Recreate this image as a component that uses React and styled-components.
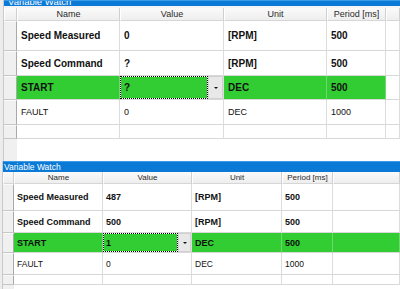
import React from "react";
import styled, { createGlobalStyle } from "styled-components";

const GlobalStyle = createGlobalStyle`
  html, body {
    margin: 0;
    padding: 0;
    width: 400px;
    height: 289px;
    overflow: hidden;
    background: #fff;
  }
  body {
    font-family: "Liberation Sans", Arial, sans-serif;
  }
`;

const GREEN = "#32cd32";

// two copies of the same watch window, the top one shown bigger
const TOP = {
  gutter: 4,
  cols: "13px 103px 104px 103px 59px 1fr",
  title: 6,
  titleSize: 9.5,
  titleIndent: 4,
  gap: 2,
  header: 13,
  headerSize: 9,
  rows: [30, 25, 24, 25, 14],
  bold: 10,
  regular: 9,
  pad: 4,
  button: 15,
  filler: 22,
  greenFiller: false,
};

const BOTTOM = {
  gutter: 3,
  cols: "11px 89px 89px 90px 51px 1fr",
  title: 11,
  titleSize: 8.5,
  titleIndent: 1,
  gap: 0,
  header: 12,
  headerSize: 8,
  rows: [27, 22, 20, 22, 10],
  bold: 9,
  regular: 8.5,
  pad: 3,
  button: 13,
  filler: 4,
  greenFiller: true,
};

const data = [
  { name: "Speed Measured", unit: "[RPM]", bold: true },
  { name: "Speed Command", unit: "[RPM]", bold: true },
  { name: "START", unit: "DEC", bold: true, selected: true },
  { name: "FAULT", unit: "DEC", bold: false },
];

const Page = styled.div`
  display: flex;
  flex-direction: column;
  width: 400px;
  height: 289px;
`;

const Panel = styled.div`
  display: flex;
  flex-direction: row;
`;

const Gutter = styled.div`
  width: ${(p) => p.$w - 1}px;
  background: #ececec;
  border-right: 1px solid #c9c9c9;
  flex-shrink: 0;
`;

const Body = styled.div`
  flex: 1;
  display: flex;
  flex-direction: column;
  min-width: 0;
`;

const TitleBar = styled.div`
  height: ${(p) => p.$h}px;
  background: #0b7ad6;
  border-top: 1px solid #3d9ae6;
  box-sizing: border-box;
  display: flex;
  align-items: flex-end;
  overflow: hidden;
  padding-left: ${(p) => p.$indent}px;
`;

const TitleText = styled.span`
  color: #fff;
  font-size: ${(p) => p.$size}px;
  line-height: ${(p) => p.$size + 1}px;
  white-space: nowrap;
  margin-bottom: ${(p) => (p.$cut ? -1 : 0)}px;
`;

const Spacer = styled.div`
  height: ${(p) => p.$h}px;
  background: #f4f4f4;
`;

const Row = styled.div`
  display: grid;
  grid-template-columns: ${(p) => p.$cols};
  height: ${(p) => p.$h}px;
`;

const HeadCell = styled.div`
  background: linear-gradient(#fafafa, #eeeeee);
  border-left: 1px solid #fff;
  border-right: 1px solid #cfcfcf;
  border-bottom: 1px solid #d6d6d6;
  box-sizing: border-box;
  color: #2a2a2a;
  font-size: ${(p) => p.$size}px;
  display: flex;
  align-items: center;
  justify-content: center;
  white-space: nowrap;
  overflow: hidden;
`;

const RowHead = styled.div`
  background: #f0f0f0;
  border-top: 1px solid #fafafa;
  border-bottom: 1px solid #c6c6c6;
  border-right: 1px solid #a9a9a9;
  box-sizing: border-box;
`;

const Cell = styled.div`
  background: ${(p) => (p.$selected ? GREEN : "#fff")};
  border-right: 1px solid ${(p) => (p.$selected ? "#6fd96f" : "#dcdcdc")};
  border-bottom: 1px solid #d8d8d8;
  box-sizing: border-box;
  color: #111;
  font-size: ${(p) => (p.$bold ? p.$bold : p.$regular)}px;
  font-weight: ${(p) => (p.$bold ? 700 : 400)};
  padding-left: ${(p) => p.$pad}px;
  display: flex;
  align-items: center;
  white-space: nowrap;
  overflow: hidden;
`;

const EditCell = styled.div`
  display: flex;
  border-right: 1px solid #dcdcdc;
  border-bottom: 1px solid #d8d8d8;
  box-sizing: border-box;
  background: #fff;
`;

const Editor = styled.div`
  flex: 1;
  border: 1px dotted #000;
  background: linear-gradient(${GREEN}, ${GREEN}) padding-box, #fff border-box;
  box-sizing: border-box;
  display: flex;
  align-items: center;
  padding-left: ${(p) => p.$pad - 1}px;
  font-size: ${(p) => p.$size}px;
  font-weight: 700;
  color: #111;
`;

const DropButton = styled.div`
  width: ${(p) => p.$w}px;
  background: #e8e8e8;
  border: 1px solid #d0d0d0;
  box-sizing: border-box;
  display: flex;
  align-items: center;
  justify-content: center;
`;

const Arrow = styled.span`
  width: 0;
  height: 0;
  border-left: 2px solid transparent;
  border-right: 2px solid transparent;
  border-top: 2px solid #111;
`;

const Filler = styled.div`
  height: ${(p) => p.$h}px;
  display: grid;
  grid-template-columns: ${(p) => p.$cols};
`;

const FillerHead = styled.div`
  background: #f0f0f0;
`;

const FillerBody = styled.div`
  background: #fff;
`;

const WatchPanel = ({ cfg, values, editValue, cutTitle }) => {
  const cellProps = { $pad: cfg.pad, $regular: cfg.regular };
  return (
    <Panel>
      <Gutter $w={cfg.gutter} />
      <Body>
        <TitleBar $h={cfg.title} $indent={cfg.titleIndent}>
          <TitleText $size={cfg.titleSize} $cut={cutTitle}>
            Variable Watch
          </TitleText>
        </TitleBar>
        {cfg.gap > 0 && <Spacer $h={cfg.gap} />}
        <Row $cols={cfg.cols} $h={cfg.header}>
          <HeadCell $size={cfg.headerSize} />
          <HeadCell $size={cfg.headerSize}>Name</HeadCell>
          <HeadCell $size={cfg.headerSize}>Value</HeadCell>
          <HeadCell $size={cfg.headerSize}>Unit</HeadCell>
          <HeadCell $size={cfg.headerSize}>Period [ms]</HeadCell>
          <HeadCell $size={cfg.headerSize} />
        </Row>
        {data.map((item, i) => {
          const b = item.bold ? cfg.bold : 0;
          const sel = item.selected;
          return (
            <Row key={item.name} $cols={cfg.cols} $h={cfg.rows[i]}>
              <RowHead />
              <Cell {...cellProps} $bold={b} $selected={sel}>
                {item.name}
              </Cell>
              {sel ? (
                <EditCell>
                  <Editor $pad={cfg.pad} $size={cfg.bold}>
                    {editValue}
                  </Editor>
                  <DropButton $w={cfg.button}>
                    <Arrow />
                  </DropButton>
                </EditCell>
              ) : (
                <Cell {...cellProps} $bold={b}>
                  {values[i]}
                </Cell>
              )}
              <Cell {...cellProps} $bold={b} $selected={sel}>
                {item.unit}
              </Cell>
              <Cell {...cellProps} $bold={b} $selected={sel}>
                {item.bold ? "500" : "1000"}
              </Cell>
              <Cell {...cellProps} $selected={sel && cfg.greenFiller} />
            </Row>
          );
        })}
        <Row $cols={cfg.cols} $h={cfg.rows[4]}>
          <RowHead />
          <Cell {...cellProps} />
          <Cell {...cellProps} />
          <Cell {...cellProps} />
          <Cell {...cellProps} />
          <Cell {...cellProps} />
        </Row>
        <Filler $h={cfg.filler} $cols={cfg.cols}>
          <FillerHead />
          <FillerBody />
        </Filler>
      </Body>
    </Panel>
  );
};

export default function App() {
  return (
    <>
      <GlobalStyle />
      <Page>
        <WatchPanel cfg={TOP} values={["0", "?", "?", "0"]} editValue="?" cutTitle />
        <WatchPanel cfg={BOTTOM} values={["487", "500", "1", "0"]} editValue="1" />
      </Page>
    </>
  );
}
